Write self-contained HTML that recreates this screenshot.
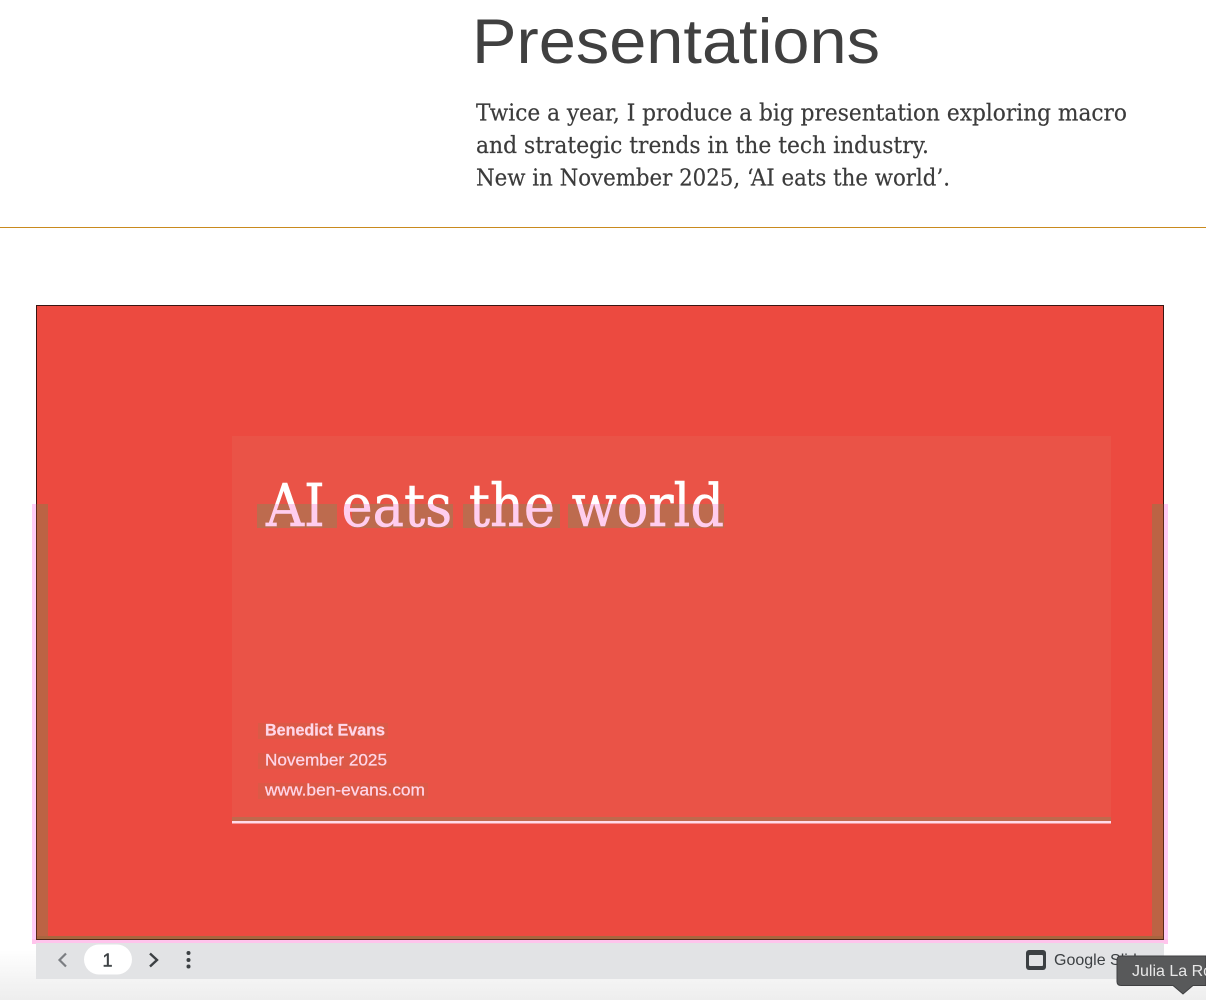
<!DOCTYPE html>
<html><head><meta charset="utf-8"><title>Presentations</title>
<style>
html,body{margin:0;padding:0;background:#fff;width:1206px;height:1000px;overflow:hidden}
svg{display:block;position:absolute;left:0;top:0}
</style></head><body>
<svg width="1206" height="1000" viewBox="0 0 1206 1000" xmlns="http://www.w3.org/2000/svg">
<defs>
<linearGradient id="fade" x1="0" y1="0" x2="0" y2="1"><stop offset="0" stop-color="#ffffff"/><stop offset="0.6" stop-color="#f4f4f4"/><stop offset="1" stop-color="#eeeeee"/></linearGradient>
<linearGradient id="tt" gradientUnits="userSpaceOnUse" x1="0" y1="470" x2="0" y2="535"><stop offset="0.523" stop-color="#fff"/><stop offset="0.523" stop-color="#ffcdee"/></linearGradient>
</defs>
<rect width="1206" height="1000" fill="#fff"/>
<rect x="0" y="950" width="1206" height="50" fill="url(#fade)"/>

<text x="472" y="63" font-family="Liberation Sans, sans-serif" font-size="63" fill="#404040" textLength="408" lengthAdjust="spacingAndGlyphs">Presentations</text>
<g font-family="DejaVu Serif, serif" font-size="23" fill="#3b3b3b" stroke="#3b3b3b" stroke-width=".2">
<text x="476" y="120.500" textLength="651" lengthAdjust="spacingAndGlyphs">Twice a year, I produce a big presentation exploring macro</text>
<text x="476" y="153" textLength="453" lengthAdjust="spacingAndGlyphs">and strategic trends in the tech industry.</text>
<text x="476" y="185.500" textLength="474" lengthAdjust="spacingAndGlyphs">New in November 2025, ‘AI eats the world’.</text>
</g>
<rect x="0" y="227" width="1206" height="1" fill="#c98a1e"/>

<!-- pink fringes outside slide -->
<rect x="32" y="504" width="5" height="440" fill="#ffcdf8"/>
<rect x="1163" y="504" width="5" height="440" fill="#ffcdf8"/>
<rect x="32" y="939" width="1136" height="5" fill="#ffc4ec"/>

<!-- toolbar -->
<rect x="36" y="943" width="1128" height="36" fill="#e2e3e5"/>

<!-- slide -->
<rect x="36.500" y="305.500" width="1127" height="634" fill="#ec4a40" stroke="#3a1512"/>
<rect x="232" y="436" width="879" height="386" fill="#ea5347"/>

<!-- brown artifacts -->
<rect x="37" y="504" width="11" height="435" fill="#bc6344"/>
<rect x="1152" y="504" width="11" height="435" fill="#bc6344"/>
<rect x="37" y="936" width="1126" height="3" fill="#a8663f"/>
<rect x="36" y="504" width="1" height="436" fill="#5a2a1c"/>
<rect x="1163" y="504" width="1" height="436" fill="#5a2a1c"/>
<rect x="36" y="939" width="1128" height="1" fill="#4f2718"/>
<rect x="257" y="504" width="80" height="24" fill="#bd6b4e"/>
<rect x="352" y="504" width="101" height="24" fill="#bd6b4e"/>
<rect x="463" y="504" width="97" height="24" fill="#bd6b4e"/>
<rect x="568" y="504" width="156" height="24" fill="#bd6b4e"/>
<rect x="232" y="817" width="879" height="4" fill="#c0694d"/>
<rect x="258" y="723" width="130" height="16" fill="#d05f48" opacity=".6"/>
<rect x="258" y="753" width="132" height="16" fill="#d05f48" opacity=".5"/>
<rect x="258" y="783" width="170" height="16" fill="#d05f48" opacity=".5"/>

<rect x="232" y="821" width="879" height="2.500" fill="#ffdbe9"/>

<text x="266" y="526" font-family="DejaVu Serif, serif" font-size="59" fill="url(#tt)" stroke="url(#tt)" stroke-width=".6" textLength="458" lengthAdjust="spacingAndGlyphs">AI eats the world</text>
<g font-family="Liberation Sans, sans-serif" font-size="17" fill="#ffd6e8" stroke="#ffd6e8" stroke-width=".25">
<text x="265" y="735.500" font-weight="700" textLength="120" lengthAdjust="spacingAndGlyphs">Benedict Evans</text>
<text x="265" y="765.500" textLength="122" lengthAdjust="spacingAndGlyphs">November 2025</text>
<text x="265" y="795.500" textLength="160" lengthAdjust="spacingAndGlyphs">www.ben-evans.com</text>
</g>

<!-- toolbar controls -->
<path d="M66 953.500L59.500 960L66 966.500" fill="none" stroke="#7b7e82" stroke-width="2.200"/>
<rect x="84" y="944.500" width="48" height="30" rx="15" fill="#fff"/>
<text x="107.500" y="966.500" font-family="Liberation Sans, sans-serif" font-size="18" fill="#3c4043" stroke="#3c4043" stroke-width=".4" text-anchor="middle">1</text>
<path d="M150 953.500L157 960L150 966.500" fill="none" stroke="#3c4043" stroke-width="2.400"/>
<circle cx="188.500" cy="953" r="2" fill="#3c4043"/><circle cx="188.500" cy="960" r="2" fill="#3c4043"/><circle cx="188.500" cy="966.500" r="2" fill="#3c4043"/>

<rect x="1026" y="950" width="20" height="20" rx="3" fill="#3c4043"/>
<rect x="1029" y="955" width="14" height="11" rx="1" fill="#e2e3e5"/>
<text x="1054" y="965" font-family="Liberation Sans, sans-serif" font-size="16" fill="#3c4043">Google Slides</text>

<!-- tooltip -->
<path d="M1121 956H1206V985.500H1193L1183 994L1173 985.500H1121Q1117 985.500 1117 981.500V960Q1117 956 1121 956Z" fill="#58595a" stroke="#3f4042" stroke-width="1"/>
<text x="1132" y="976" font-family="Liberation Sans, sans-serif" font-size="16" fill="#e8e8e8">Julia La Roche</text>
</svg>
</body></html>
